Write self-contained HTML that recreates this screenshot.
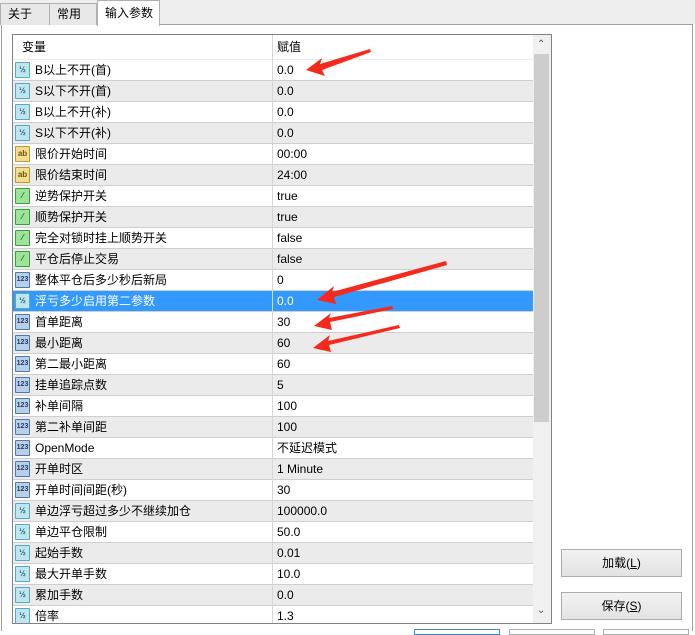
<!DOCTYPE html>
<html><head><meta charset="utf-8"><style>
*{margin:0;padding:0;box-sizing:border-box}
body{width:695px;height:634px;background:#fff;position:relative;overflow:hidden;font-family:"Liberation Sans","Noto Sans CJK SC",sans-serif;font-size:12px;color:#000}
.abs{position:absolute}
.tabbar{left:0;top:0;width:695px;height:24px;background:#eeeeee}
.tab{position:absolute;top:3px;height:22px;background:#e8e8e8;border:1px solid #b0b0b0;border-bottom:none;padding-left:7px;line-height:20px;font-size:12px}
.panel{left:1px;top:24px;width:692px;height:607px;border:1px solid #a0a0a0;border-bottom:none;background:#fff}
.list{left:12px;top:34px;width:540px;height:590px;border:1px solid #828282;background:#fff;overflow:hidden}
.hdr{position:absolute;left:0;top:0;width:520px;height:25px;background:#fff;border-bottom:1px solid #e5edf7;line-height:24px}
.hdr span{position:absolute;top:0}
.row{position:absolute;left:0;width:520px;height:21px;border-bottom:1px solid #cfcfcf;line-height:20px}
.row.g{background:#ebebeb}
.row.s{background:#3399ff;color:#fff}
.row .n{position:absolute;left:22px;top:0;white-space:nowrap}
.row .v{position:absolute;left:264px;top:0}
.vl{position:absolute;left:259px;top:0;width:1px;height:590px;background:#d6d6d6}
.ic{position:absolute;left:2px;top:2px;width:15px;height:16px;border-radius:1px;font-size:8px;font-weight:bold;text-align:center;line-height:14px;border:1px solid}
.f{background:#bfe6ef;border-color:#5aa7bf;color:#26607a}
.a{background:#f4dd8c;border-color:#b99a3a;color:#6b5318}
.b{background:#9ee39a;border-color:#3a9e3a;color:#1e6a1e}
.i{background:#b8cfe8;border-color:#4f79a8;color:#1f3f6d;font-size:7px}
.sb{position:absolute;left:520px;top:0;width:18px;height:590px;background:#f0f0f0}
.thumb{position:absolute;left:1px;top:19px;width:15px;height:368px;background:#cdcdcd}
.btn{position:absolute;width:121px;height:28px;border:1px solid #adadad;background:linear-gradient(#f2f2f2,#e3e3e3);text-align:center;line-height:26px;font-size:12px}
</style></head><body>
<div class="abs tabbar"></div>
<div class="abs panel"></div>
<div class="tab" style="left:0;width:50px">关于</div>
<div class="tab" style="left:49px;width:48px">常用</div>
<div class="tab" style="left:97px;top:0;height:26px;width:63px;background:#fff;line-height:24px">输入参数</div>
<div class="abs list">
<div class="hdr"><span style="left:9px">变量</span><span style="left:264px">赋值</span></div>
<div id="rows"></div>
<div class="vl"></div>
<div class="sb"><div style="position:absolute;left:4px;top:4px;font-size:10px;color:#555">&#8963;</div><div class="thumb"></div><div style="position:absolute;left:4px;top:570px;font-size:10px;color:#555">&#8964;</div></div>
</div>
<div class="btn" style="left:561px;top:549px">加载(<u>L</u>)</div>
<div class="btn" style="left:561px;top:592px">保存(<u>S</u>)</div>
<div class="abs" style="left:414px;top:629px;width:86px;height:6px;border:1px solid #3c8ad6"></div>
<div class="abs" style="left:509px;top:629px;width:86px;height:6px;border:1px solid #adadad"></div>
<div class="abs" style="left:603px;top:629px;width:86px;height:6px;border:1px solid #adadad"></div>
<svg class="abs" style="left:0;top:0" width="695" height="634">
<g fill="#f52a1c">
<polygon points="306,70 322,58 320,64 370,49 371,52 322,70 325,76"/>
<polygon points="317,300 334,286 332,292 446,261 447,265 334,297 336,304"/>
<polygon points="314,326 331,313 329,318 392,306 393,309 330,322 332,330"/>
<polygon points="313,348 330,335 328,341 399,325 400,328 329,345 331,352"/>
</g></svg>
<script>
var d=[["f","B以上不开(首)","0.0"],["f","S以下不开(首)","0.0"],["f","B以上不开(补)","0.0"],["f","S以下不开(补)","0.0"],["a","限价开始时间","00:00"],["a","限价结束时间","24:00"],["b","逆势保护开关","true"],["b","顺势保护开关","true"],["b","完全对锁时挂上顺势开关","false"],["b","平仓后停止交易","false"],["i","整体平仓后多少秒后新局","0"],["f","浮亏多少启用第二参数","0.0"],["i","首单距离","30"],["i","最小距离","60"],["i","第二最小距离","60"],["i","挂单追踪点数","5"],["i","补单间隔","100"],["i","第二补单间距","100"],["i","OpenMode","不延迟模式"],["i","开单时区","1 Minute"],["i","开单时间间距(秒)","30"],["f","单边浮亏超过多少不继续加仓","100000.0"],["f","单边平仓限制","50.0"],["f","起始手数","0.01"],["f","最大开单手数","10.0"],["f","累加手数","0.0"],["f","倍率","1.3"]];
var lab={f:"½",a:"ab",b:"⁄",i:"123"};
var h="";
for(var k=0;k<d.length;k++){var c=k==11?"s":(k%2?"g":"");
h+='<div class="row '+c+'" style="top:'+(25+k*21)+'px"><div class="ic '+d[k][0]+'">'+lab[d[k][0]]+'</div><span class="n">'+d[k][1]+'</span><span class="v">'+d[k][2]+'</span></div>';}
document.getElementById("rows").innerHTML=h;
</script>
</body></html>
